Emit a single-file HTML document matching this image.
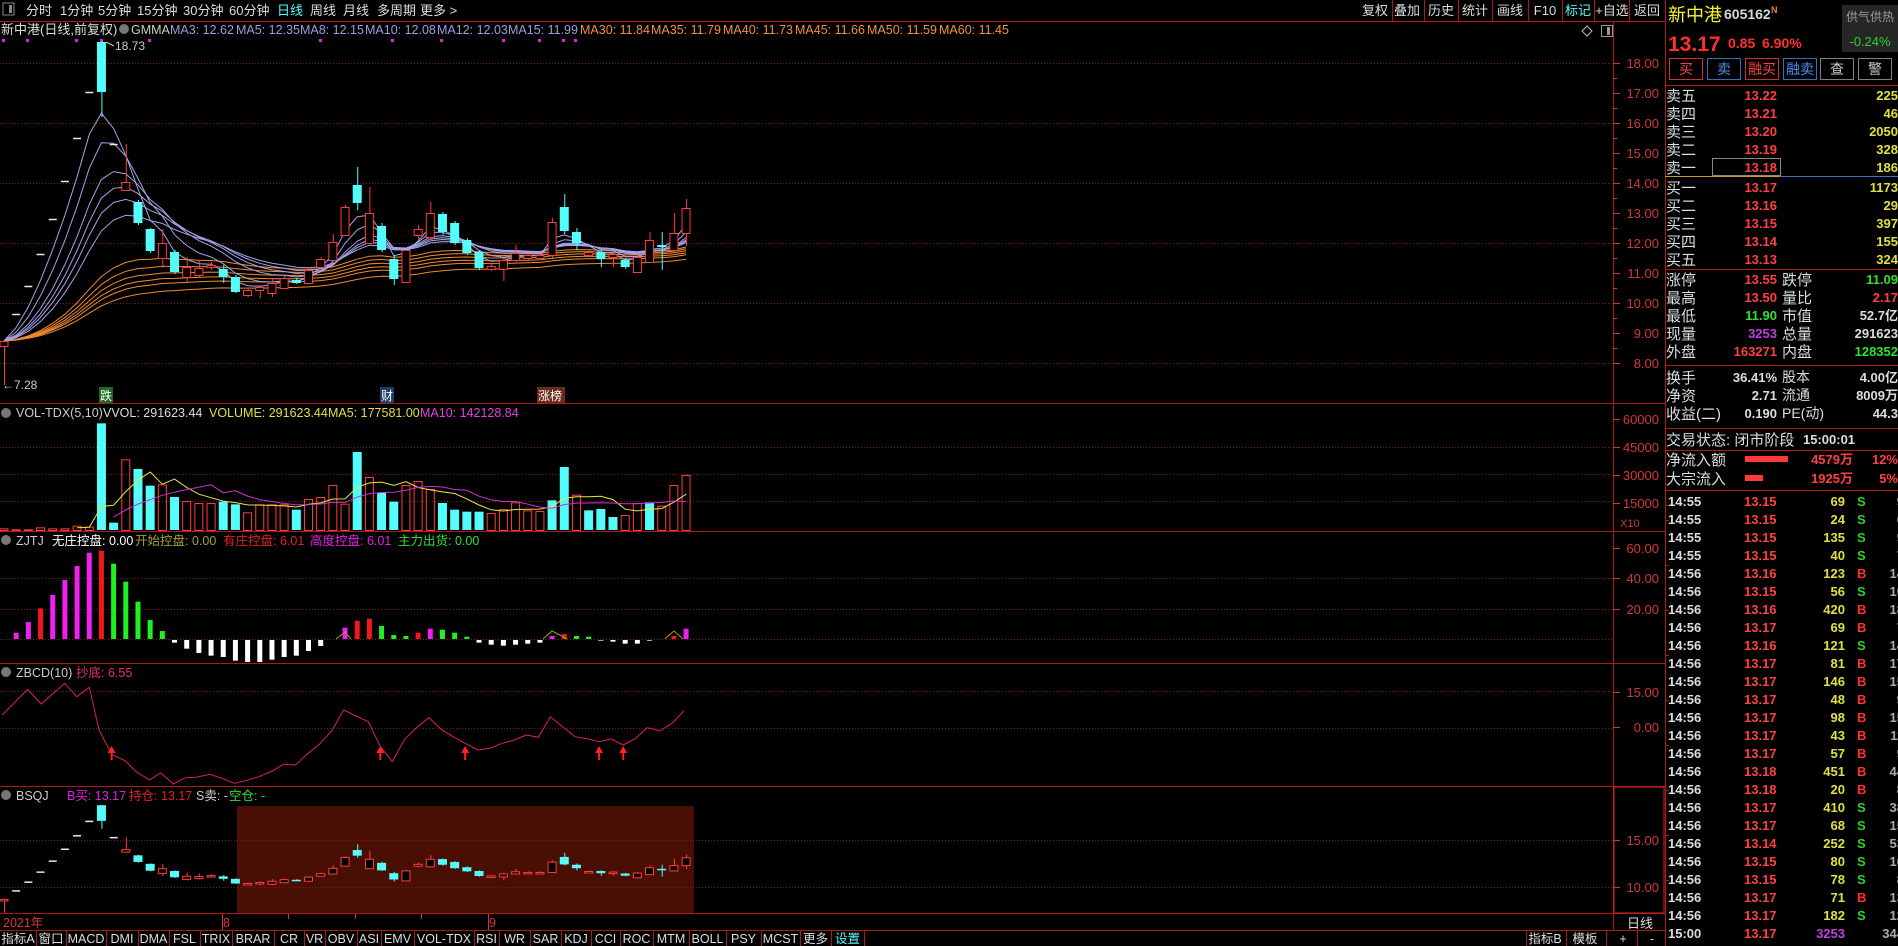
<!DOCTYPE html>
<html><head><meta charset="utf-8">
<style>
html,body{margin:0;padding:0;background:#000;overflow:hidden}
svg{display:block}
text{font-family:"Liberation Sans","WenQuanYi Zen Hei","Noto Sans CJK SC",sans-serif}
</style></head>
<body>
<svg id="s" width="1898" height="946" xmlns="http://www.w3.org/2000/svg"></svg>
<script>
var S=document.getElementById('s'),NS='http://www.w3.org/2000/svg';
function el(n,a){var e=document.createElementNS(NS,n);for(var k in a)e.setAttribute(k,a[k]);S.appendChild(e);return e;}
function T(x,y,s,c,sz,an,w){var e=el('text',{x:x,y:y,fill:c||'#ccc','font-size':sz||13,'text-anchor':an||'start','font-weight':w||'normal'});e.textContent=s;return e;}
function L(x1,y1,x2,y2,c,w,d){var a={x1:x1,y1:y1,x2:x2,y2:y2,stroke:c,'stroke-width':w||1};if(d)a['stroke-dasharray']=d;return el('line',a);}
function R(x,y,w,h,f,st){var a={x:x,y:y,width:w,height:h,fill:f||'none'};if(st){a.stroke=st;}return el('rect',a);}
function P(pts,c,w){return el('polyline',{points:pts.map(function(p){return p[0].toFixed(1)+','+p[1].toFixed(1)}).join(' '),fill:'none',stroke:c,'stroke-width':w||1});}
var RED='#b01818',AX='#d03838',CY='#54fcfc',CR='#ff3c3c';
var X=function(i){return 4+i*12.18;};
R(237,806,457,107,'#4a0f04');
[63,123,183,243,303,363,447,474,501,578,609,691,728,840,887].forEach(function(y){L(0,y+.5,1613,y+.5,'#7a1e1e',1,'1 2');});
[21,403,531,663,786,913,930].forEach(function(y){L(0,y+.5,1665,y+.5,RED,1);});
L(1613.5,21,1613.5,930,RED,1);L(1665.5,0,1665.5,946,RED,1);
R(1614,787,50,126,'none','#e02020');
function ax(y,s){T(1659,y+5,s,AX,13,'end');L(1613,y+.5,1620,y+.5,AX,1);}
for(var p=18;p>=8;p--)ax(63+(18-p)*30,p.toFixed(2));
for(var p=17.5;p>=8;p--)L(1613,63+(18-p)*30+.5,1617,63+(18-p)*30+.5,AX,1);
ax(419,'60000');ax(447,'45000');ax(475,'30000');ax(503,'15000');T(1620,527,'X10',AX,11);
ax(548,'60.00');ax(578,'40.00');ax(609,'20.00');
ax(692,'15.00');ax(727,'0.00');ax(840,'15.00');ax(887,'10.00');
R(3,3,11,12,'none','#888');R(9,5,3,8,'#888');
var tb=[['分时',26],['1分钟',60],['5分钟',98],['15分钟',137],['30分钟',183],['60分钟',229],['日线',277,CY],['周线',310],['月线',343],['多周期',377],['更多 >',420]];
tb.forEach(function(a){T(a[1],15,a[0],a[2]||'#ddd',13);});
var rb=[['复权',1375],['叠加',1407],['历史',1441],['统计',1475],['画线',1510],['F10',1545],['标记',1578,CY],['+自选',1612],['返回',1647]];
rb.forEach(function(a){T(a[1],15,a[0],a[2]||'#ddd',13,'middle');});
[1392,1424,1458,1492,1528,1562,1594,1629].forEach(function(x){L(x+.5,0,x+.5,21,RED,1);});
T(1,34,'新中港(日线,前复权)','#ddd',13);
el('circle',{cx:124,cy:29,r:5,fill:'#777'});
var lg=[['GMMA','#ccc',131],['MA3: 12.62','#9c9ce0',170],['MA5: 12.35','#9c9ce0',236],['MA8: 12.15','#9c9ce0',300],['MA10: 12.08','#9c9ce0',365],['MA12: 12.03','#9c9ce0',437],['MA15: 11.99','#9c9ce0',508],['MA30: 11.84','#f09040',580],['MA35: 11.79','#f09040',651],['MA40: 11.73','#f09040',723],['MA45: 11.66','#f09040',795],['MA50: 11.59','#f09040',867],['MA60: 11.45','#f09040',939]];
lg.forEach(function(a){T(a[2],34,a[0],a[1],12.5);});
[2,26,75,100,148,319,391,440,502,538,562,574].forEach(function(x){R(x,39,3,3,'#e020e0');});
el('path',{d:'M1587 26 L1592 31 L1587 36 L1582 31 Z',fill:'none',stroke:'#bbb'});
R(1601.5,25.5,11,11,'none','#999');R(1607,27,3,8,'#999');
var C=[['r',341,346,341,385],['d',314],['d',286],['d',254],['d',219],['d',181],['d',138],['d',92],
['c',42,92,41,117],['d',144],['r',182,190,144,190],['c',202,223,200,225],['c',229,251,228,253],['r',243,258,229,268],['c',252,272,250,274],
['r',267,277,257,282],['r',268,275,260,278],['r',265,267,262,270],['c',269,277,265,283],['c',277,292,275,293],['r',290,295,289,297],
['r',287,290,285,298],['r',283,293,278,297],['r',278,288,276,289],['c',280,283,278,284],['r',270,283,268,284],['r',259,267,257,268],
['r',242,260,234,261],['r',207,235,205,236],['c',185,203,167,210],['r',213,243,187,243],['c',226,250,223,252],['c',259,279,255,285],
['r',250,282,250,282],['r',229,235,225,240],['r',213,237,202,240],['c',214,232,212,235],['c',223,243,221,245],['c',240,253,238,255],
['c',252,268,250,270],['r',266,269,264,271],['r',260,269,258,281],['r',253,260,245,262],['r',255,258,253,260],['r',255,258,253,260],
['r',222,255,218,258],['c',207,231,194,234],['c',232,243,228,250],['r',252,255,250,257],['c',252,259,250,267],['r',254,257,252,267],
['c',260,267,258,269],['r',257,272,255,272],['r',240,262,232,263],['c',245,247,232,270],['r',233,250,213,252],['r',208,233,199,246]];
function closeY(c){return c[0]=='d'?c[1]:(c[0]=='r'?c[1]:c[2]);}
function ema(n,col){var a=2/(n+1),v=closeY(C[0]),pts=[];for(var i=0;i<C.length;i++){v=i?a*closeY(C[i])+(1-a)*v:v;pts.push([X(i),v]);}P(pts,col,1);}
[60,50,45,40,35,30].forEach(function(n){ema(n,'#f08a30');});
[15,12,10,8,5,3].forEach(function(n){ema(n,'#a4a4e8');});
function drawC(map,bw){C.forEach(function(c,i){var x=X(i);
 if(c[0]=='d'){L(x-4,map(c[1])+.5,x+4,map(c[1])+.5,'#e8e8e8',1.5);return;}
 var col=c[0]=='r'?CR:CY;L(x+.5,map(c[3]),x+.5,map(c[4]),col,1);
 var t=map(c[1]),b=map(c[2]);if(b-t<1.5)b=t+1.5;
 if(c[0]=='r'){R(x-bw/2+.5,t+.5,bw-1,b-t,'#000',col);}else R(x-bw/2,t,bw,b-t,col);});}
drawC(function(y){return y;},9);
T(115,50,'18.73','#ccc',12);L(106,42,114,46,'#ccc',1);
T(2,389,'←7.28','#ccc',12);
R(99,387,14,16,'#1e6a1e');T(100,400,'跌','#fff',12);
R(380,387,14,16,'#1e3f6a');T(381,400,'财','#fff',12);
R(537,387,28,16,'#6a2a1e');T(538,400,'涨榜','#fff',12);
el('circle',{cx:6,cy:413,r:5,fill:'#777'});
T(16,417,'VOL-TDX(5,10)','#ccc',12.5);T(103,417,'VVOL: 291623.44','#ddd',12.5);T(209,417,'VOLUME: 291623.44','#e0e040',12.5);T(328,417,'MA5: 177581.00','#e0e040',12.5);T(420,417,'MA10: 142128.84','#e040e0',12.5);
var V=[625,628,628,622,625,625,617,620,310,608,418,447,497,493,531,543,549,549,545,553,577,553,553,553,569,537,531,495,551,396,471,518,545,495,483,507,549,569,575,575,579,567,547,571,573,541,441,524,571,567,591,585,549,547,557,495,465];
var VC='rrrrrrrrccrccrcrrrccrrrrcrrrrcrccrrrccccrrrrrccrcccrrcrr';
var vy=function(z){return 320+z/3;};
V.forEach(function(z,i){var x=X(i),t=vy(z),col=VC[i]=='c'?CY:CR;if(VC[i]=='c')R(x-4.5,t,9,530-t,col);else R(x-4,t+.5,8,530-t,'none',col);});
function vma(n,col,st){var pts=[];for(var i=st;i<V.length;i++){var s=0,k=0;for(var j=Math.max(0,i-n+1);j<=i;j++){s+=530-vy(V[j]);k++;}pts.push([X(i),530-s/k]);}P(pts,col,1);}
vma(5,'#e8e840',6);vma(10,'#d030d0',9);
el('circle',{cx:6,cy:540,r:5,fill:'#777'});
T(16,545,'ZJTJ','#ccc',12.5);T(52,545,'无庄控盘: 0.00','#fff',12.5);T(135,545,'开始控盘: 0.00','#a0a030',12.5);T(223,545,'有庄控盘: 6.01','#e02020',12.5);T(310,545,'高度控盘: 6.01','#e020e0',12.5);T(398,545,'主力出货: 0.00','#30e030',12.5);
L(0,639.5,1613,639.5,'#7a1e1e',1,'1 2');
var Z=[[1,308,'m'],[2,276,'m'],[3,235,'r'],[4,195,'m'],[5,150,'m'],[6,108,'m'],[7,68,'m'],[8,62,'r'],[9,101,'g'],[10,155,'g'],[11,215,'g'],[12,270,'g'],[13,303,'g'],
[14,338,'w'],[15,356,'w'],[16,369,'w'],[17,377,'w'],[18,381,'w'],[19,392,'w'],[20,396,'w'],[21,396,'w'],[22,389,'w'],[23,381,'w'],[24,377,'w'],[25,363,'w'],[26,348,'w'],
[28,293,'m'],[29,272,'r'],[30,266,'r'],[31,288,'g'],[32,315,'g'],[33,318,'g'],[34,308,'r'],[35,296,'m'],[36,299,'g'],[37,308,'g'],[38,320,'g'],
[39,338,'w'],[40,344,'w'],[41,347,'w'],[42,344,'w'],[43,341,'w'],[44,338,'w'],[45,318,'m'],[46,312,'r'],[47,318,'g'],[48,320,'g'],
[49,332,'w'],[50,335,'w'],[51,341,'w'],[52,341,'w'],[53,332,'w'],[55,318,'r'],[56,296,'m']];
var ZC={m:'#f020f0',r:'#f01818',g:'#20f020',w:'#ffffff'};
Z.forEach(function(z){var x=X(z[0]),y=530+z[1]/3;if(y<639)R(x-2.5,y,5,639-y,ZC[z[2]]);else R(x-2.5,640,5,y-640,ZC[z[2]]);});
P([[X(27)+3,639],[X(28),632],[X(28)+6,639]],'#a0a030');P([[X(44)+3,639],[X(45),631],[X(46)+3,639]],'#a0a030');P([[X(54)+3,639],[X(55),631],[X(56)-3,639]],'#a0a030');
el('circle',{cx:6,cy:672,r:5,fill:'#777'});
T(16,677,'ZBCD(10)','#ccc',12.5);T(76,677,'抄底: 6.55','#e0306a',12.5);
var ZB=[[5,225],[62,148],[92,192],[145,130],[172,170],[200,142],[222,270],[250,343],[280,362],[305,395],[335,420],[360,398],[388,432],[415,413],[440,412],[470,403],[497,415],[525,430],[550,422],[580,410],[610,393],[635,373],[662,375],[690,340],[716,312],[743,273],[770,210],[798,228],[825,245],[852,320],[879,365],[906,298],[934,262],[961,233],[988,268],[1015,290],[1042,310],[1070,330],[1097,325],[1125,310],[1152,300],[1179,285],[1206,292],[1233,230],[1260,260],[1288,290],[1315,296],[1342,305],[1369,297],[1396,315],[1424,295],[1450,263],[1478,273],[1505,250],[1532,213]];
P(ZB.map(function(p){return [p[0]/2.24,640+p[1]/3];}),'#d8205a',1);
[250,852,1042,1342,1396].forEach(function(a){var x=a/2.24;el('path',{d:'M'+(x-4)+' 753 L'+x+' 746 L'+(x+4)+' 753 L'+(x+1)+' 753 L'+(x+1)+' 760 L'+(x-1)+' 760 L'+(x-1)+' 753 Z',fill:'#ff2020'});});
el('circle',{cx:6,cy:795,r:5,fill:'#777'});
T(16,800,'BSQJ','#ccc',12.5);T(67,800,'B买: 13.17','#e020e0',12.5);T(129,800,'持仓: 13.17','#e02020',12.5);T(196,800,'S卖: -','#ccc',12.5);T(229,800,'空仓: -','#30e030',12.5);
drawC(function(y){return 811.8+(y-63)*0.3133;},9);
T(3,927,'2021年',AX,12.5);T(223,927,'8',AX,12.5);T(489,927,'9',AX,12.5);
[222,288,355,421,488].forEach(function(x){L(x+.5,914,x+.5,919,AX,1);});
L(222.5,914,222.5,930,AX,1);L(488.5,914,488.5,930,AX,1);
T(1640,928,'日线','#ddd',13,'middle');
var tabs=['指标A','窗口','MACD','DMI','DMA','FSL','TRIX','BRAR','CR','VR','OBV','ASI','EMV','VOL-TDX','RSI','WR','SAR','KDJ','CCI','ROC','MTM','BOLL','PSY','MCST','更多','设置'];
var sep=[0,36,66,106,138,169,200,232,274,304,325,357,381,414,474,499,530,561,591,620,653,689,726,761,800,831,864];
tabs.forEach(function(t,i){T((sep[i]+sep[i+1])/2,943,t,i==25?CY:'#ddd',12.5,'middle');L(sep[i+1]+.5,930,sep[i+1]+.5,946,RED,1);});
[[1545,'指标B'],[1585,'模板'],[1623,'+'],[1652,'-']].forEach(function(a){T(a[0],943,a[1],'#ddd',12.5,'middle');});
[1526,1566,1606,1637].forEach(function(x){L(x+.5,930,x+.5,946,RED,1);});
T(1668,21,'新中港','#f4f430',18);T(1724,19,'605162','#d8d8d8',14,'start','bold');T(1771,13,'N','#f08030',9,'start','bold');
R(1842,5,56,47,'#262626');T(1870,21,'供气供热','#999',12,'middle');T(1870,46,'-0.24%','#30d030',13,'middle');
T(1668,51,'13.17','#ff3030',21,'start','bold');T(1728,48,'0.85','#ff3030',14,'start','bold');T(1762,48,'6.90%','#ff3030',14,'start','bold');
[['买',1669,'#d03030','#ff4040'],['卖',1707,'#3070c0','#5090f0'],['融买',1745,'#d03030','#ff4040'],['融卖',1783,'#3070c0','#5090f0'],['查',1820,'#808080','#ccc'],['警',1858,'#808080','#ccc']].forEach(function(a){R(a[1]+.5,58.5,33,21,'none',a[2]);T(a[1]+17,74,a[0],a[3],14,'middle');});
[85,269,365,428,450,490].forEach(function(y){L(1665,y+.5,1898,y+.5,RED,1);});
L(1665,176.5,1780,176.5,'#c0a030',1);L(1780,176.5,1898,176.5,'#4070c0',1);
var ob=[['卖五','13.22','225'],['卖四','13.21','46'],['卖三','13.20','2050'],['卖二','13.19','328'],['卖一','13.18','186'],['买一','13.17','1173'],['买二','13.16','29'],['买三','13.15','397'],['买四','13.14','155'],['买五','13.13','324']];
ob.forEach(function(r,i){var y=(i<5?95+i*18:187+(i-5)*18)+6;T(1666,y,r[0],'#ddd',15);T(1777,y-1,r[1],'#ff4040',13,'end','bold');T(1898,y-1,r[2],'#e0e040',13,'end','bold');});
R(1712.5,158.5,68,17,'none','#888');
var st=[['涨停','13.55','#ff4040','跌停','11.09','#30e030'],['最高','13.50','#ff4040','量比','2.17','#ff4040'],['最低','11.90','#30e030','市值','52.7亿','#ddd'],['现量','3253','#c040e0','总量','291623','#ddd'],['外盘','163271','#ff4040','内盘','128352','#30e030']];
st.forEach(function(r,i){var y=279+i*18+6;T(1666,y,r[0],'#ddd',15);T(1777,y-1,r[1],r[2],13,'end','bold');T(1782,y,r[3],'#ddd',15);T(1898,y-1,r[4],r[5],13,'end','bold');});
var s2=[['换手','36.41%','股本','4.00亿'],['净资','2.71','流通','8009万'],['收益(二)','0.190','PE(动)','44.3']];
s2.forEach(function(r,i){var y=377+i*18+6;T(1666,y,r[0],'#ddd',15);T(1777,y-1,r[1],'#ddd',13,'end','bold');T(1782,y-1,r[2],'#ddd',14);T(1898,y-1,r[3],'#ddd',13,'end','bold');});
T(1666,445,'交易状态: 闭市阶段','#ddd',15);T(1803,444,'15:00:01','#ddd',13,'start','bold');
T(1666,465,'净流入额','#ddd',15);R(1745,456,43,6,'#ff3838');T(1853,464,'4579万','#ff4040',13,'end','bold');T(1898,464,'12%','#ff4040',13,'end','bold');
T(1666,484,'大宗流入','#ddd',15);R(1745,475,18,6,'#ff3838');T(1853,483,'1925万','#ff4040',13,'end','bold');T(1898,483,'5%','#ff4040',13,'end','bold');
var tk=[['14:55','13.15','69','S','9'],['14:55','13.15','24','S','6'],['14:55','13.15','135','S','9'],['14:55','13.15','40','S','7'],['14:56','13.16','123','B','14'],['14:56','13.15','56','S','10'],['14:56','13.16','420','B','18'],['14:56','13.17','69','B','7'],['14:56','13.16','121','S','14'],['14:56','13.17','81','B','17'],['14:56','13.17','146','B','15'],['14:56','13.17','48','B','9'],['14:56','13.17','98','B','15'],['14:56','13.17','43','B','11'],['14:56','13.17','57','B','9'],['14:56','13.18','451','B','44'],['14:56','13.18','20','B','8'],['14:56','13.17','410','S','38'],['14:56','13.17','68','S','15'],['14:56','13.14','252','S','53'],['14:56','13.15','80','S','16'],['14:56','13.15','78','S','8'],['14:56','13.17','71','B','13'],['14:56','13.17','182','S','12'],['15:00','13.17','3253','','344']];
tk.forEach(function(r,i){var y=501+i*18+5;T(1668,y,r[0],'#ddd',13,'start','bold');T(1744,y,r[1],'#ff4040',13,'start','bold');T(1845,y,r[2],i==24?'#c040e0':'#e0e040',13,'end','bold');if(r[3])T(1857,y,r[3],r[3]=='B'?'#ff3030':'#30d030',13,'start','bold');T(1904,y,r[4],'#aaa',13,'end','bold');});
[505,520,565,610,655,700,745,790,835,880].forEach(function(y){L(1665,y+.5,1669,y+.5,RED,1);});
</script>
</body></html>
